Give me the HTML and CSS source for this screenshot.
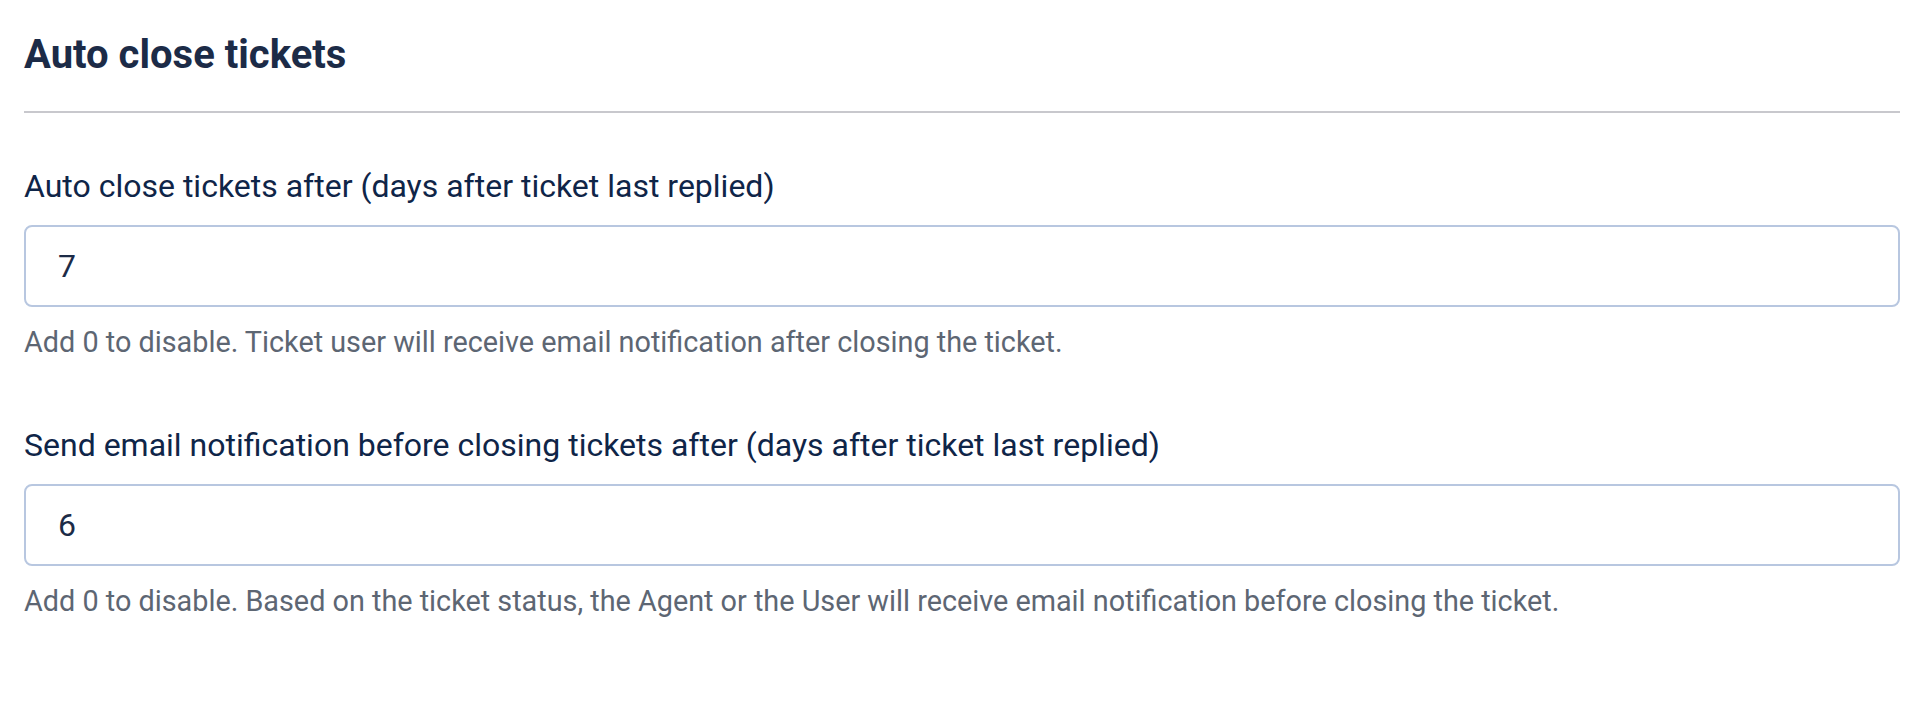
FILE: index.html
```html
<!DOCTYPE html>
<html lang="en">
<head>
<meta charset="utf-8">
<title>Auto close tickets</title>
<link rel="stylesheet" href="styles.css">
</head>
<body>
<div class="page">
  <div class="section-head">
    <h2 class="section-title">Auto close tickets</h2>
  </div>
  <div class="field first">
    <label class="field-label" for="close-after">Auto close tickets after (days after ticket last replied)</label>
    <input class="field-input" id="close-after" type="text" value="7">
    <p class="field-help">Add 0 to disable. Ticket user will receive email notification after closing the ticket.</p>
  </div>
  <div class="field">
    <label class="field-label" for="notify-before">Send email notification before closing tickets after (days after ticket last replied)</label>
    <input class="field-input" id="notify-before" type="text" value="6">
    <p class="field-help">Add 0 to disable. Based on the ticket status, the Agent or the User will receive email notification before closing the ticket.</p>
  </div>
</div>
</body>
</html>
```
FILE: styles.css
```css
html, body {
  margin: 0;
  padding: 0;
  background: #ffffff;
}
body {
  font-family: Roboto, "Liberation Sans", sans-serif;
}
.page {
  padding: 31px 28px 0 24px;
}
.section-head {
  padding-bottom: 32px;
  border-bottom: 2px solid #c8c8cd;
}
.section-title {
  margin: 0;
  font-size: 40px;
  line-height: 48px;
  font-weight: 700;
  color: #1c2b47;
}
.field {
  display: flex;
  flex-direction: column;
  margin-top: 65px;
}
.field.first {
  margin-top: 53px;
}
.field-label {
  font-size: 32px;
  line-height: 40px;
  color: #0f2548;
}
.field-input {
  margin-top: 19px;
  box-sizing: border-box;
  height: 82px;
  width: 100%;
  padding: 0 32px;
  border: 2px solid #b8c7e0;
  border-radius: 8px;
  background: #ffffff;
  font-family: Roboto, "Liberation Sans", sans-serif;
  font-size: 32px;
  color: #1c2b47;
  outline: none;
}
.field-help {
  margin: 17px 0 0;
  font-size: 28.8px;
  line-height: 36px;
  color: #5d6673;
}
```
